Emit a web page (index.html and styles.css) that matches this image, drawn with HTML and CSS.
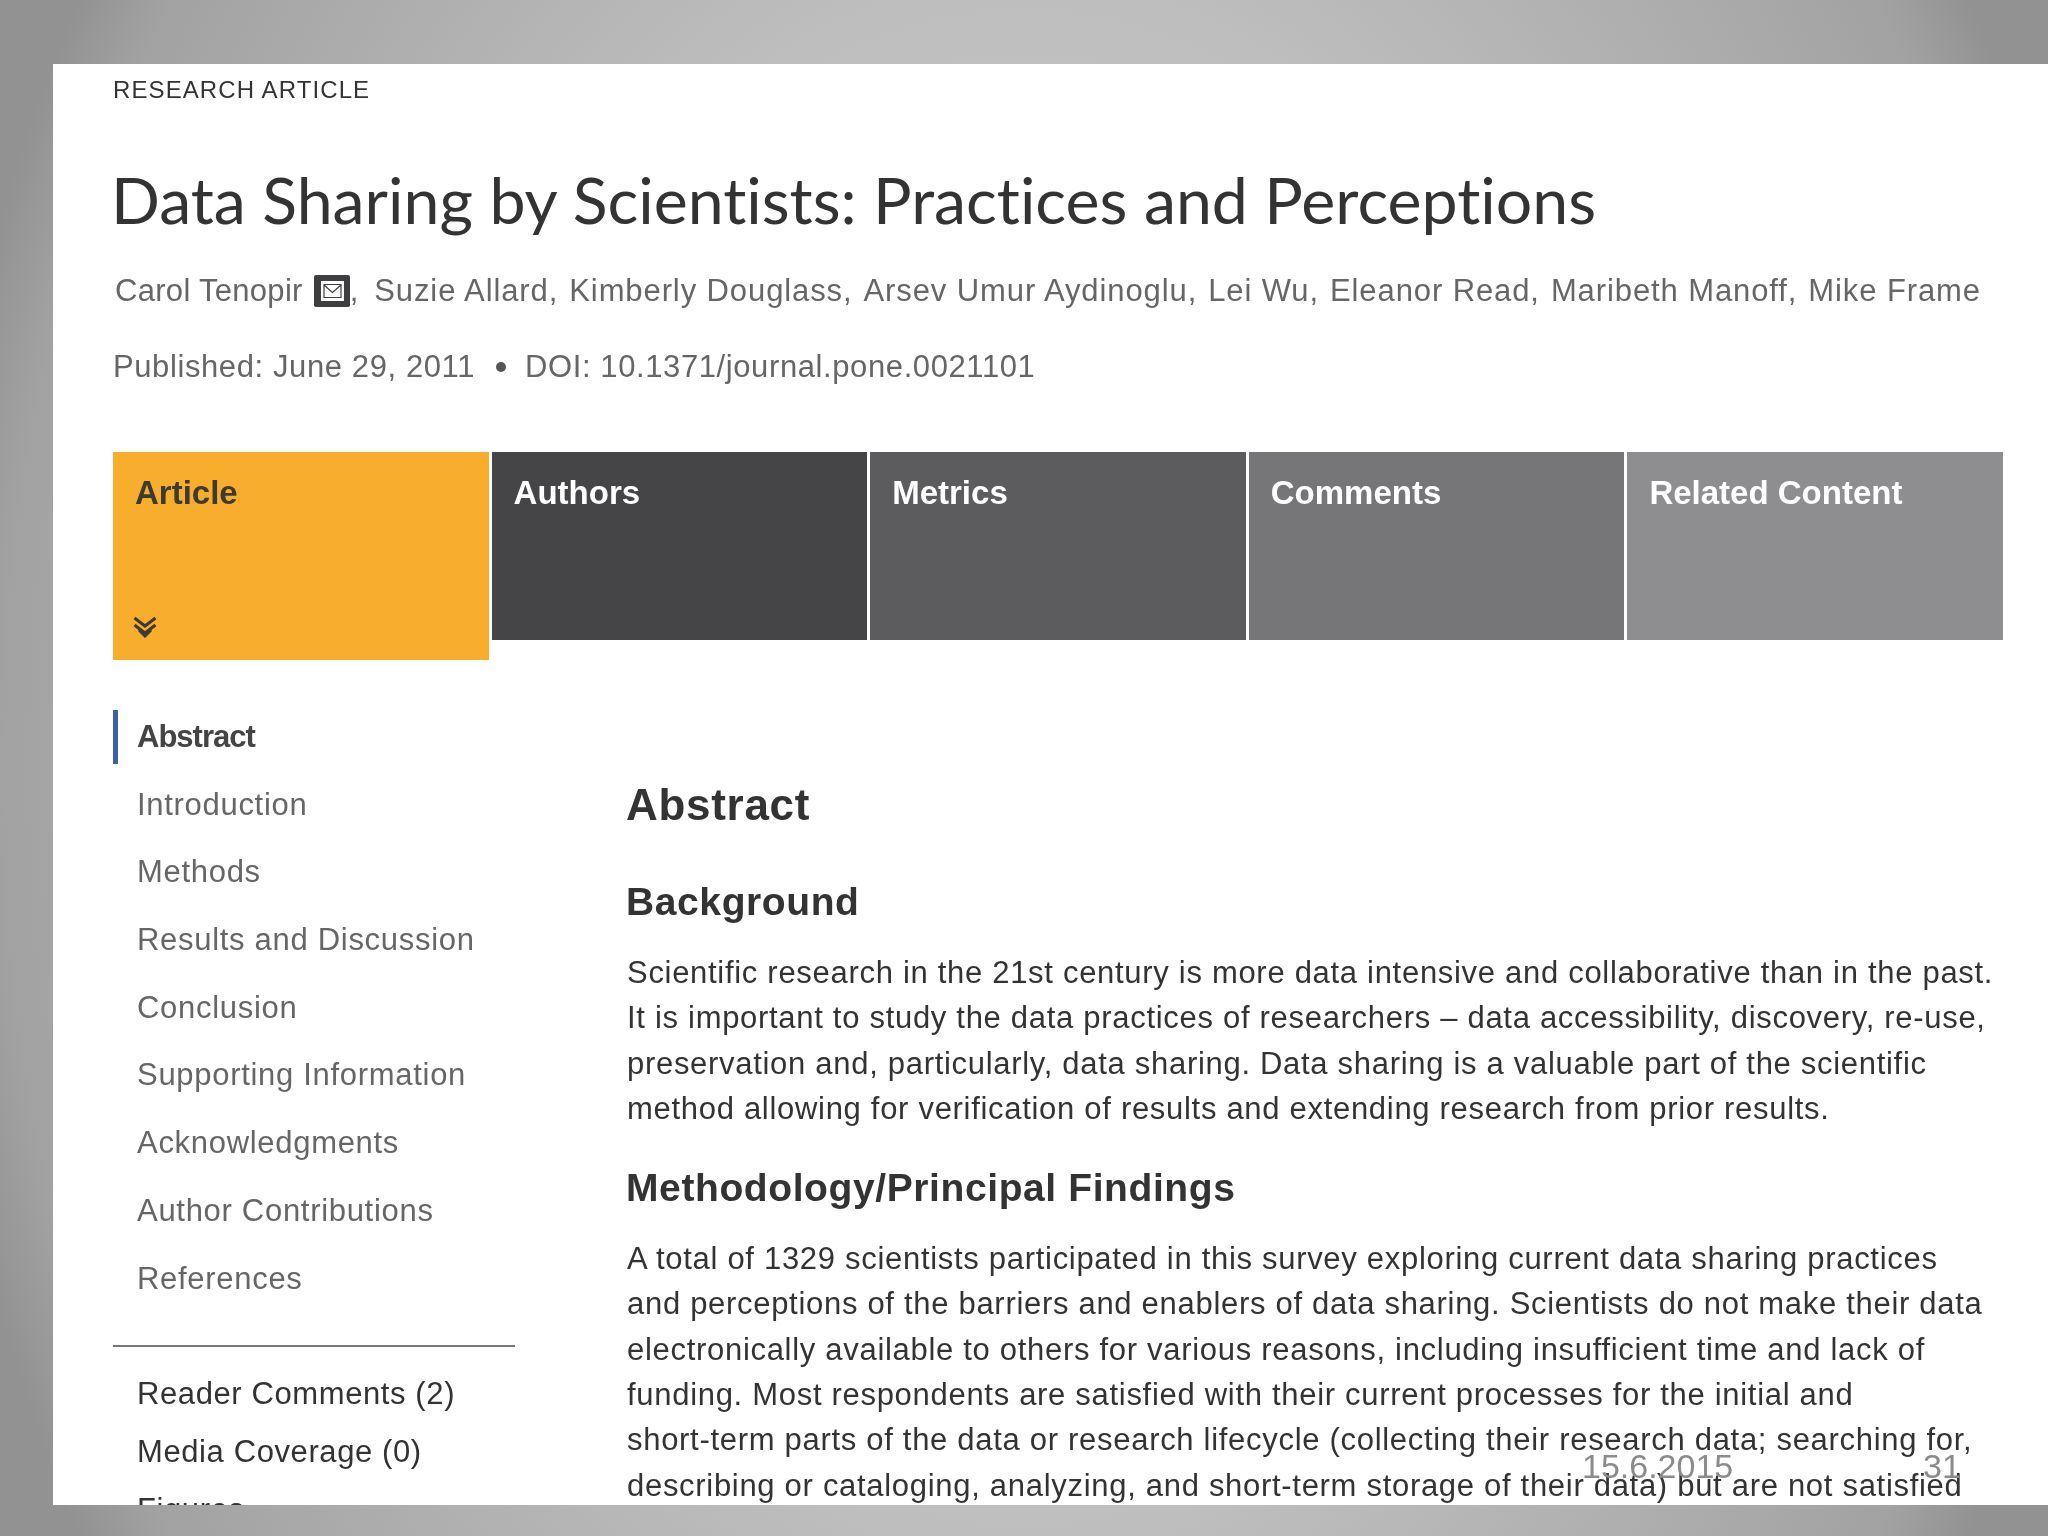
FILE: index.html
```html
<!DOCTYPE html>
<html lang="en">
<head>
<meta charset="utf-8">
<title>Data Sharing by Scientists</title>
<link rel="stylesheet" href="styles.css">
</head>
<body>
<div class="slide">
  <div class="sheet">
    <div class="kicker">RESEARCH ARTICLE</div>
    <h1 class="title">Data Sharing by Scientists: Practices and Perceptions</h1>
    <div class="authors">
      <span class="first-author">Carol Tenopir</span>
      <svg class="mail" viewBox="0 0 36 32" width="36" height="32" aria-hidden="true">
        <rect width="36" height="32" rx="2" fill="#3f3e40"/>
        <rect x="7" y="6" width="23" height="20" fill="#fff"/>
        <path d="M10 9.500h17v13H10zM10 10l8.500 7.500L27 10" fill="none" stroke="#3f3e40" stroke-width="1.200"/>
      </svg><span class="comma">,</span><span>Suzie Allard,</span>
      <span>Kimberly Douglass,</span>
      <span>Arsev Umur Aydinoglu,</span>
      <span>Lei Wu,</span>
      <span>Eleanor Read,</span>
      <span>Maribeth Manoff,</span>
      <span>Mike Frame</span>
    </div>
    <div class="published">
      <span>Published: June 29, 2011</span><span class="dot"></span><span>DOI: 10.1371/journal.pone.0021101</span>
    </div>
    <div class="tabs">
      <div class="tab tab-article">
        <span>Article</span>
        <svg class="chev" viewBox="0 0 24 22" width="24" height="22" aria-hidden="true">
          <path d="M1.500 2l10.500 8L22.500 2M1.500 9l10.500 8 10.500-8M6 14l6 6 6-6" fill="none" stroke="#3d3a33" stroke-width="3"/>
        </svg>
      </div>
      <div class="tab tab-authors">Authors</div>
      <div class="tab tab-metrics">Metrics</div>
      <div class="tab tab-comments">Comments</div>
      <div class="tab tab-related">Related Content</div>
    </div>
    <div class="columns">
      <nav class="side">
        <a class="nav nav-active">Abstract</a>
        <a class="nav">Introduction</a>
        <a class="nav">Methods</a>
        <a class="nav">Results and Discussion</a>
        <a class="nav">Conclusion</a>
        <a class="nav">Supporting Information</a>
        <a class="nav">Acknowledgments</a>
        <a class="nav">Author Contributions</a>
        <a class="nav">References</a>
        <div class="side-rule"></div>
        <a class="extra">Reader Comments (2)</a>
        <a class="extra">Media Coverage (0)</a>
        <a class="extra">Figures</a>
      </nav>
      <main class="main">
        <h2 class="h-abstract">Abstract</h2>
        <h3 class="h-sub h-first">Background</h3>
        <p class="para">Scientific research in the 21st century is more data intensive and collaborative than in the past.<br>It is important to study the data practices of researchers – data accessibility, discovery, re-use,<br>preservation and, particularly, data sharing. Data sharing is a valuable part of the scientific<br>method allowing for verification of results and extending research from prior results.</p>
        <h3 class="h-sub h-second">Methodology/Principal Findings</h3>
        <p class="para">A total of 1329 scientists participated in this survey exploring current data sharing practices<br>and perceptions of the barriers and enablers of data sharing. Scientists do not make their data<br>electronically available to others for various reasons, including insufficient time and lack of<br>funding. Most respondents are satisfied with their current processes for the initial and<br>short-term parts of the data or research lifecycle (collecting their research data; searching for,<br>describing or cataloging, analyzing, and short-term storage of their data) but are not satisfied</p>
      </main>
    </div>
    <div class="footer-date">15.6.2015</div>
    <div class="footer-num">31</div>
  </div>
</div>
</body>
</html>
```
FILE: styles.css
```css
* { box-sizing: border-box; }
html, body { margin: 0; padding: 0; }
body { font-family: "Liberation Sans", Arial, sans-serif; color: #333; }
.slide {
  width: 2048px;
  height: 1536px;
  overflow: hidden;
  padding: 64px 0 31px 53px;
  background: radial-gradient(1100px 1500px at 1024px 768px, #c6c6c6 0, #bfbfbf 50%, #a2a2a2 93%, #929292 100%);
}
.sheet {
  position: relative;
  height: 100%;
  overflow: hidden;
  background: #fff;
  padding: 11px 45px 0 60px;
  filter: blur(0.4px);
}
.kicker { font-size: 24px; line-height: 30px; color: #333; letter-spacing: 1.100px; }
.title {
  margin: 55px 0 0 -2px;
  font-family: Lato, sans-serif;
  font-weight: 400;
  font-size: 64.400px;
  line-height: 78px;
  color: #333;
  font-variant-ligatures: none;
  white-space: nowrap;
}
.authors {
  display: flex;
  align-items: center;
  margin: 33px 0 0 2px;
  font-size: 31px;
  line-height: 40px;
  letter-spacing: 0.900px;
  color: #666;
  white-space: nowrap;
  gap: 11px;
}
.first-author { letter-spacing: 0.300px; }
.mail { margin-right: -11px; }
.comma { margin-right: 4px; }
.published {
  display: flex;
  align-items: center;
  margin-top: 36px;
  font-size: 31px;
  line-height: 40px;
  letter-spacing: 0.600px;
  color: #666;
  white-space: nowrap;
}
.dot {
  width: 10px;
  height: 10px;
  border-radius: 50%;
  background: #555;
  margin: 0 19px 0 21px;
}
.tabs { display: flex; gap: 3px; margin-top: 65px; align-items: flex-start; }
.tab {
  width: 376px;
  height: 188px;
  padding: 21px 22px;
  font-size: 33px;
  line-height: 40px;
  font-weight: 700;
  color: #fff;
}
.tab-article {
  display: flex;
  flex-direction: column;
  justify-content: space-between;
  height: 208px;
  color: #3d3a33;
  background: #f8ae2c;
  padding-bottom: 22px;
}
.chev { margin-left: -2px; }
.tab-authors { background: #454446; }
.tab-metrics { background: #5c5b5e; }
.tab-comments { background: #767578; }
.tab-related { background: #8e8d90; }
.columns { display: flex; }
.side { width: 402px; flex: none; padding-top: 50px; }
.nav {
  display: block;
  height: 67.700px;
  padding-left: 24px;
  font-size: 31px;
  line-height: 54px;
  letter-spacing: 0.700px;
  color: #666;
  white-space: nowrap;
}
.nav-active {
  height: 54px;
  margin-bottom: 13.700px;
  border-left: 5px solid #3c5fa8;
  padding-left: 19px;
  font-weight: 700;
  color: #444;
  letter-spacing: -1px;
}
.side-rule { height: 2px; background: #777; margin: 26px 0 18px; }
.extra {
  display: block;
  padding-left: 24px;
  font-size: 31px;
  line-height: 58px;
  letter-spacing: 0.600px;
  color: #333;
  white-space: nowrap;
}
.main { margin-left: 112px; padding-top: 117px; white-space: nowrap; }
.h-abstract { margin: 0 0 0 -1px; font-size: 44px; line-height: 56px; font-weight: 700; letter-spacing: 0.700px; color: #333; }
.h-sub { margin: 0; font-size: 39px; line-height: 50px; font-weight: 700; letter-spacing: 0.600px; color: #333; }
.h-first { margin: 44px 0 0 -1px; }
.h-second { margin: 32px 0 0 -1px; }
.para { margin: 23px 0 0; font-size: 31px; line-height: 45.300px; letter-spacing: 0.700px; color: #333; }
.footer-date, .footer-num {
  position: absolute;
  font-size: 34px;
  line-height: 40px;
  color: #8b8b8b;
}
.footer-date { left: 1529px; top: 1382px; }
.footer-num { left: 1870px; top: 1382px; }
```
